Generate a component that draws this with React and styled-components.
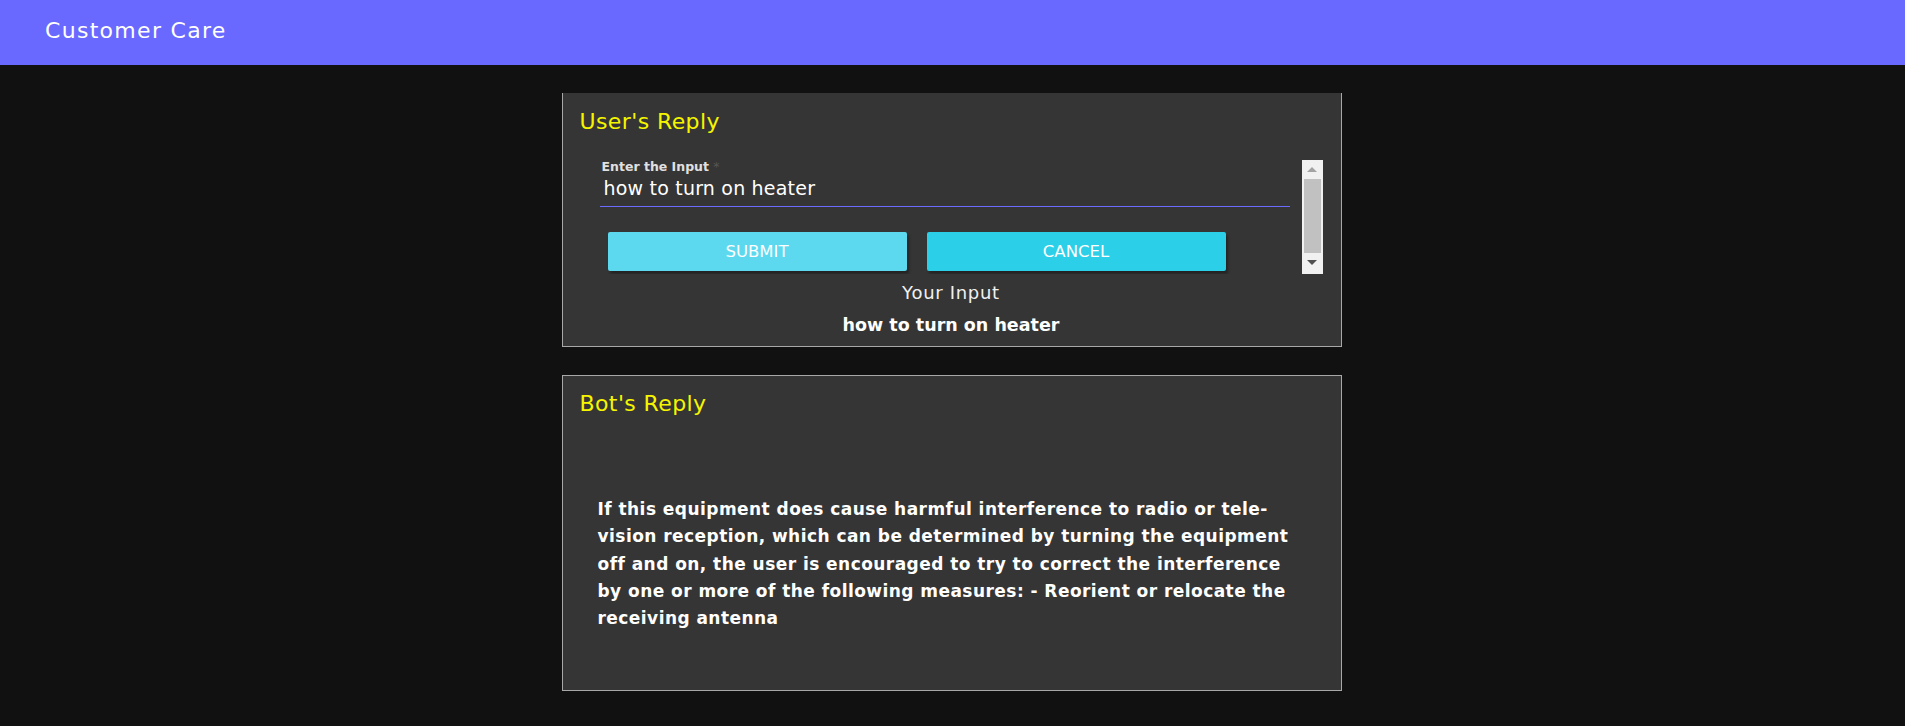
import React from "react";
import styled, { createGlobalStyle } from "styled-components";

const GlobalStyle = createGlobalStyle`
  body {
    margin: 0;
    background: #111111;
    font-family: "DejaVu Sans", Verdana, sans-serif;
  }
`;

export default function App() {
  return (
    <>
      <GlobalStyle />
      <Header>
        <Brand>Customer Care</Brand>
      </Header>
      <Main>
        <Card $first>
          <CardTitle>User's Reply</CardTitle>
          <ScrollArea>
            <ScrollContent>
              <Field>
                <Label>
                  Enter the Input <Star>*</Star>
                </Label>
                <Input defaultValue="how to turn on heater" />
              </Field>
              <Buttons>
                <Button $light>Submit</Button>
                <Button>Cancel</Button>
              </Buttons>
            </ScrollContent>
            <ScrollBar>
              <Arrow $up />
              <Thumb />
              <Arrow />
            </ScrollBar>
          </ScrollArea>
          <EchoLabel>Your Input</EchoLabel>
          <EchoValue>how to turn on heater</EchoValue>
        </Card>
        <Card>
          <CardTitle>Bot's Reply</CardTitle>
          <Answer>
            If this equipment does cause harmful interference to radio or tele-
            <br />
            vision reception, which can be determined by turning the equipment
            <br />
            off and on, the user is encouraged to try to correct the interference
            <br />
            by one or more of the following measures: - Reorient or relocate the
            <br />
            receiving antenna
          </Answer>
        </Card>
      </Main>
    </>
  );
}

const Header = styled.header`
  height: 65px;
  background: #6969ff;
  display: flex;
  align-items: center;
  padding: 0 45px 4px;
  box-sizing: border-box;
`;

const Brand = styled.div`
  color: #ffffff;
  font-size: 22px;
  letter-spacing: 1.3px;
`;

const Main = styled.main`
  display: flex;
  flex-direction: column;
  align-items: center;
  gap: 28px;
  padding: 28px 2px 35px 0;
`;

const Card = styled.section`
  width: 780px;
  box-sizing: border-box;
  background: #353535;
  border: 1px solid #a8a8a8;
  border-top: ${(p) => (p.$first ? "none" : "1px solid #a8a8a8")};
  padding: ${(p) => (p.$first ? "17px" : "16px")} 18px 0 17px;
  min-height: ${(p) => (p.$first ? "254px" : "316px")};
`;

const CardTitle = styled.h2`
  margin: 0;
  color: #f5f500;
  font-size: 22px;
  letter-spacing: 0.4px;
  font-weight: normal;
  line-height: 24px;
`;

const ScrollArea = styled.div`
  margin: 26px 0 0 20px;
  height: 114px;
  display: flex;
`;

const ScrollContent = styled.div`
  flex: 1;
  overflow: hidden;
`;

const ScrollBar = styled.div`
  width: 21px;
  background: #f1f1f1;
  display: flex;
  flex-direction: column;
  align-items: center;
`;

const Arrow = styled.div`
  height: 19px;
  width: 100%;
  display: flex;
  align-items: center;
  justify-content: center;

  &::before {
    content: "";
    border-left: 5px solid transparent;
    border-right: 5px solid transparent;
    ${(p) =>
      p.$up
        ? "border-bottom: 5px solid #a3a3a3;"
        : "border-top: 5px solid #505050;"}
  }
`;

const Thumb = styled.div`
  width: 17px;
  height: 74px;
  background: #c1c1c1;
`;

const Field = styled.div`
  width: 690px;
  display: flex;
  flex-direction: column;
`;

const Label = styled.label`
  color: #e0e0e0;
  font-size: 12.5px;
  font-weight: bold;
  padding-left: 2px;
  line-height: 13px;
`;

const Star = styled.span`
  color: #555555;
  font-weight: normal;
`;

const Input = styled.input`
  background: transparent;
  border: none;
  border-bottom: 1px solid #6b6bff;
  color: #ffffff;
  font-family: inherit;
  font-size: 19px;
  letter-spacing: 0.2px;
  padding: 4px 4px 7px;
  outline: none;
`;

const Buttons = styled.div`
  display: flex;
  gap: 20px;
  padding: 25px 0 25px 8px;
`;

const Button = styled.button`
  width: 299px;
  height: 39px;
  border: none;
  border-radius: 2px;
  background: ${(p) => (p.$light ? "#5cd9ee" : "#2ccfe8")};
  color: #ffffff;
  font-family: inherit;
  font-size: 16.5px;
  text-transform: uppercase;
  box-shadow: 2px 3px 3px rgba(0, 0, 0, 0.35);
  cursor: pointer;
`;

const EchoLabel = styled.div`
  text-align: center;
  color: #f0f0f0;
  font-size: 18px;
  letter-spacing: 0.7px;
  margin-top: 9px;
  line-height: 20px;
`;

const EchoValue = styled.div`
  text-align: center;
  color: #ffffff;
  font-size: 17.5px;
  font-weight: bold;
  margin-top: 12px;
  line-height: 20px;
`;

const Answer = styled.p`
  margin: 80px 0 0 18px;
  color: #ffffff;
  font-size: 17px;
  letter-spacing: 0.45px;
  font-weight: bold;
  line-height: 27.3px;
  white-space: nowrap;
`;
